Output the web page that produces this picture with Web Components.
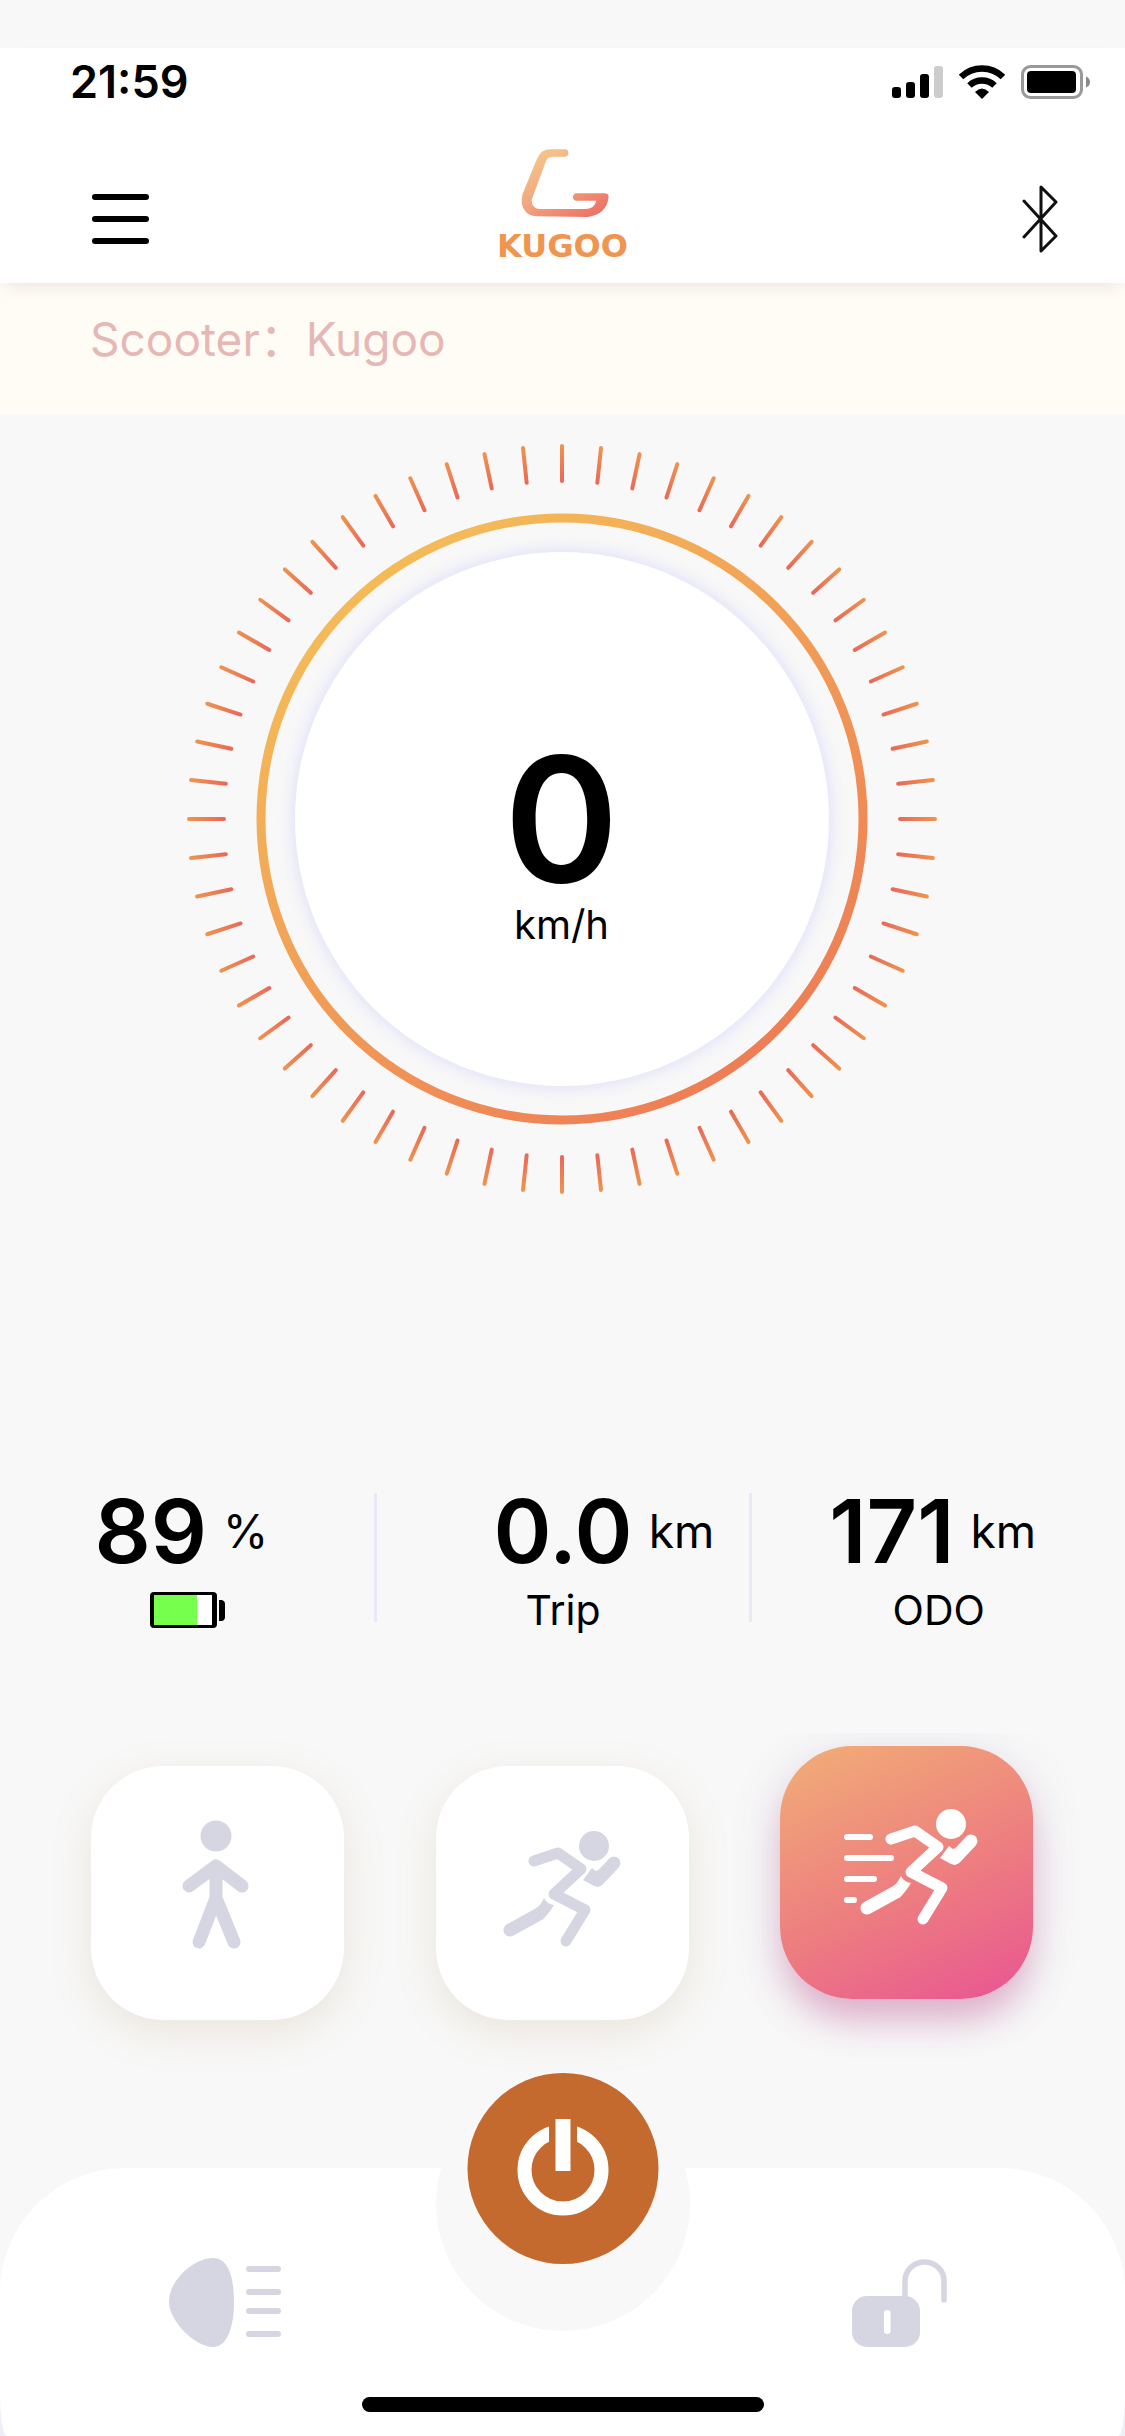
<!DOCTYPE html>
<html lang="en">
<head>
<meta charset="utf-8">
<meta name="viewport" content="width=device-width, initial-scale=1">
<title>Kugoo</title>
<style>
  html, body { margin: 0; }
  body {
    background: #f8f8f8;
    color: #000;
    font-family: Inter, "Noto Sans CJK SC", sans-serif;
    --muted: #d6d6e2;
    --page: #f8f8f8;
  }
</style>
</head>
<body>
<kugoo-app></kugoo-app>

<script>
const define = (name, html) => {
  const template = document.createElement('template');
  template.innerHTML = `<style>
    * { box-sizing: border-box; }
    button { appearance: none; border: 0; margin: 0; padding: 0; background: none; color: inherit; font: inherit; cursor: pointer; }
    svg { display: block; }
  </style>${html}`;
  customElements.define(name, class extends HTMLElement {
    constructor() {
      super();
      this.attachShadow({ mode: 'open' }).append(template.content.cloneNode(true));
      if (name === 'speed-gauge') this.drawTicks();
    }
    // One tick every six degrees round the dial
    drawTicks() {
      const first = this.shadowRoot.querySelector('.tick');
      for (let angle = 6; angle < 360; angle += 6) {
        const tick = first.cloneNode();
        tick.setAttribute('transform', `rotate(${angle} 376 376)`);
        first.parentNode.append(tick);
      }
    }
  });
};

define('status-bar', `
  <style>
    :host { display: flex; align-items: center; justify-content: space-between; padding: 7px 34px 0 70px; }
    time { font-size: 45px; line-height: 54px; font-weight: 600; }
    div { display: flex; align-items: center; gap: 16px; }
  </style>
  <time>21:59</time>
  <div>
    <svg width="51" height="34" viewBox="0 0 51 34" role="img" aria-label="Signal">
      <rect x="0" y="22" width="9" height="11" rx="3"/><rect x="14" y="17" width="9" height="16" rx="3"/>
      <rect x="28" y="9" width="9" height="24" rx="3"/><rect x="42" y="1" width="9" height="32" rx="3" fill="#ccc"/>
    </svg>
    <svg width="46" height="34" viewBox="0 0 46 34" role="img" aria-label="Wi-Fi">
      <path d="M2 12.500A30 30 0 0 1 44 12.500M10.500 21A18 18 0 0 1 35.500 21" transform="translate(0 -.5)" fill="none" stroke="#000" stroke-width="6.500"/>
      <path d="M16 27Q23 20 30 27L23 34Z"/>
    </svg>
    <svg width="70" height="34" viewBox="0 0 70 34" role="img" aria-label="Battery">
      <rect x="1.500" y="1.500" width="59" height="31" rx="8" fill="none" stroke="#999" stroke-width="3"/>
      <rect x="6" y="6" width="49" height="22" rx="4"/><path d="M65 11.500Q69 13 69 17T65 22.500Z" fill="#888"/>
    </svg>
  </div>`);

define('brand-logo', `
  <style>
    :host { display: flex; flex-direction: column; align-items: center; gap: 13px; }
    span { color: #f0954f; font: bold 32px/32px "DejaVu Sans", sans-serif; }
  </style>
  <svg width="94" height="68" viewBox="257 56 282 204" aria-hidden="true">
    <defs><linearGradient id="g" x1=".1" y1="0" x2=".85" y2="1">
      <stop offset="0" stop-color="#f6cb8d"/><stop offset=".5" stop-color="#f2a77f"/><stop offset="1" stop-color="#ec6f66"/>
    </linearGradient></defs>
    <path fill="url(#g)" d="M408 57H362Q335 57 323 85L280 190Q270 225 290 245Q303 258 325 258L475 260Q532 252 538 200Q538 189 525 189H442Q431 190 431 200Q431 211 442 211H501Q495 236 468 236H330Q307 234 307 208L350 92Q356 79 370 79H408Q417 78 417 68Q417 57 408 57Z"/>
  </svg>
  <span>KUGOO</span>`);

define('app-header', `
  <style>
    :host { display: block; position: relative; z-index: 1; margin-top: 48px; background: #fff; box-shadow: 0 8px 16px -6px rgba(80, 50, 60, .13); }
    nav { display: grid; grid-template-columns: 1fr auto 1fr; align-items: end; padding: 40px 67px 21px; }
    button { height: 86px; display: grid; place-items: center; }
    .menu { justify-self: start; margin-left: 25px; }
    .link { justify-self: end; }
  </style>
  <status-bar></status-bar>
  <nav aria-label="Main">
    <button class="menu" aria-label="Menu">
      <svg width="57" height="50" viewBox="0 0 57 50"><path d="M3 3H54M3 25H54M3 47H54" stroke="#000" stroke-width="6" stroke-linecap="round"/></svg>
    </button>
    <brand-logo></brand-logo>
    <button class="link" aria-label="Bluetooth">
      <svg width="36" height="70" viewBox="0 0 36 70"><path d="M2 17L34 52L19 67V3L34 18L2 53" fill="none" stroke="#111" stroke-width="3" stroke-linejoin="round" stroke-linecap="round"/></svg>
    </button>
  </nav>`);

define('scooter-banner', `
  <style>
    :host { display: block; padding: 26px 90px 45px; background: #fffcf5; color: #e5b8b5; font-size: 46px; line-height: 60px; }
  </style>
  <slot></slot>`);

define('speed-gauge', `
  <style>
    :host { display: grid; justify-items: center; margin-top: 29px; padding-right: 2px; }
    svg, .reading { grid-area: 1 / 1; }
    .reading { display: flex; flex-direction: column; align-items: center; gap: 16px; padding-top: 311px; }
    .speed { font-size: 174px; line-height: 130px; font-weight: 600; }
    .unit { font-size: 40px; line-height: 50px; }
  </style>
  <svg width="752" height="752" viewBox="0 0 752 752" aria-hidden="true">
    <defs>
      <linearGradient id="ring" x1=".15" y1=".15" x2=".75" y2=".95"><stop offset="0" stop-color="#f4ba58"/><stop offset="1" stop-color="#ee7e55"/></linearGradient>
      <linearGradient id="bar" gradientUnits="userSpaceOnUse" x1="0" y1="1" x2="0" y2="40"><stop offset="0" stop-color="#ef944e"/><stop offset="1" stop-color="#ea6757"/></linearGradient>
      <filter id="soft" x="-10%" y="-10%" width="120%" height="120%"><feGaussianBlur stdDeviation="8"/></filter>
    </defs>
    <g><rect class="tick" x="374" y="1" width="4" height="39" rx="2" fill="url(#bar)"/></g>
    <circle cx="376" cy="376" r="301" fill="none" stroke="url(#ring)" stroke-width="9"/>
    <circle cx="376" cy="376" r="269" fill="#dfdffa" filter="url(#soft)"/>
    <circle cx="376" cy="376" r="267" fill="#fff"/>
  </svg>
  <div class="reading"><span class="speed">0</span><span class="unit">km/h</span></div>`);

define('ride-stat', `
  <style>
    :host { display: flex; flex: 1; flex-direction: column; gap: 16px; }
    .value { display: flex; align-items: center; justify-content: center; gap: 16px; padding-right: 12px; }
    :host([centered]) .value { display: grid; grid-template-columns: 1fr auto 1fr; padding-right: 0; }
    :host([centered]) .number { grid-column: 2; }
    .number { font-size: 88px; line-height: 76px; font-weight: 600; }
    .unit { font-size: 46px; line-height: 46px; }
    .label { display: flex; justify-content: center; font-size: 41px; line-height: 50px; }
  </style>
  <div class="value"><span class="number"><slot name="number"></slot></span><span class="unit"><slot name="unit"></slot></span></div>
  <div class="label"><slot></slot></div>`);

define('battery-level', `
  <style>:host { display: block; padding-top: 7px; }</style>
  <svg width="75" height="36" viewBox="0 0 75 36" role="img" aria-label="Battery level">
    <rect width="67" height="36" rx="4"/><rect x="4" y="3" width="58" height="30" fill="#fff"/>
    <rect x="4" y="3" width="43" height="30" fill="#76ff4c"/><path d="M69 8H72Q75 9 75 12V25Q75 28 72 29H69Z"/>
  </svg>`);

define('ride-stats', `
  <style>
    :host { display: flex; align-items: flex-start; margin-top: 298px; padding-left: 1px; }
    i { width: 3px; height: 129px; background: #ebe9f7; }
  </style>
  <ride-stat><span slot="number">89</span><span slot="unit">%</span><battery-level></battery-level></ride-stat>
  <i></i>
  <ride-stat centered><span slot="number">0.0</span><span slot="unit">km</span>Trip</ride-stat>
  <i></i>
  <ride-stat><span slot="number">171</span><span slot="unit">km</span>ODO</ride-stat>`);

define('mode-button', `
  <style>
    :host { display: block; color: var(--muted); }
    button { display: block; border-radius: 72px; background: #fff; box-shadow: 0 12px 40px rgba(170, 140, 90, .17); }
    :host([active]) { color: #fff; margin-top: -20px; clip-path: inset(-13px -60px -80px); }
    :host([active]) button { background: linear-gradient(155deg, #f1a977 6%, #ed7d80 56%, #e95a90 94%); box-shadow: 0 26px 36px -6px rgba(205, 80, 140, .36), 0 10px 50px rgba(120, 90, 150, .18); }
  </style>
  <button><slot></slot></button>`);

const runner = `
  <g fill="none" stroke="currentColor" stroke-linecap="round" stroke-linejoin="round">
    <path stroke-width="11" d="M98 95L122 87L145 103L118 128L149 144L130 175"/>
    <path stroke-width="13" d="M178 97L162 114M74 164L103 148"/>
  </g>
  <g fill="currentColor">
    <circle cx="158" cy="80" r="15"/>
    <path d="M147 114L156 102L160 105L165 103L168 116L162 121L158 120Z"/>
    <path d="M100 142Q104 140 108 132Q111 138 118 139Q112 149 106 154Z"/>
  </g>`;

define('ride-modes', `
  <style>
    :host { display: flex; align-items: flex-start; justify-content: space-between; margin-top: 131px; padding: 0 92px 0 91px; }
  </style>
  <mode-button>
    <svg width="253" height="254" viewBox="0 0 253 254" role="img" aria-label="Walk mode">
      <circle cx="125" cy="70" r="15.500" fill="currentColor"/>
      <path d="M98 120L125 100L151 120M125 100V137M108 176L125 132L143 176" fill="none" stroke="currentColor" stroke-width="13" stroke-linecap="round" stroke-linejoin="round"/>
    </svg>
  </mode-button>
  <mode-button>
    <svg width="253" height="254" viewBox="0 0 253 254" role="img" aria-label="Run mode">${runner}</svg>
  </mode-button>
  <mode-button active>
    <svg width="253" height="253" viewBox="0 0 253 253" role="img" aria-label="Sprint mode">
      <g transform="translate(13 -2)">${runner}</g>
      <path d="M67 91H90M67 112H111M67 133H94M67 154H74" stroke="currentColor" stroke-width="6" stroke-linecap="round"/>
    </svg>
  </mode-button>`);

define('control-bar', `
  <style>
    :host { display: block; position: relative; margin-top: 148px; background: linear-gradient(transparent 220px, #eeeef6 220px); }
    nav { display: flex; justify-content: space-between; padding: 86px 173px 85px 165px; background: #fff; border-radius: 125px 125px 7px 7px / 125px 125px 41px 41px; color: var(--muted); }
    nav > button { display: grid; place-items: center; height: 97px; }
    .notch { position: absolute; left: 50%; top: 0; width: 254px; height: 164px; transform: translateX(-50%); overflow: hidden; }
    .notch::before { content: ""; display: block; height: 254px; margin-top: -91px; border-radius: 50%; background: var(--page); }
    .power { position: absolute; left: 50%; top: -95px; transform: translateX(-50%); border-radius: 50%; background: #c46a2f; }
    .home { position: absolute; left: 50%; bottom: 24px; width: 402px; height: 15px; transform: translateX(-50%); border-radius: 8px; background: #000; }
  </style>
  <nav aria-label="Controls">
    <button aria-label="Headlight">
      <svg width="120" height="97" viewBox="165 2254 120 97">
        <path fill="currentColor" d="M169 2302C169 2279 195 2258 213 2258C229 2258 234 2279 234 2302C234 2325 228 2347 213 2347C195 2347 169 2321 169 2302Z"/>
        <path d="M249 2269H278M249 2292H278M249 2311H278M249 2334H278" stroke="currentColor" stroke-width="6" stroke-linecap="round"/>
      </svg>
    </button>
    <button aria-label="Unlock">
      <svg width="104" height="97" viewBox="848 2254 104 97">
        <rect x="852" y="2296" width="68" height="51" rx="15" fill="currentColor"/>
        <path d="M905 2300V2281A19.500 19 0 0 1 944 2281V2300" fill="none" stroke="currentColor" stroke-width="5.500" stroke-linecap="round"/>
        <rect x="884" y="2310" width="6.500" height="24" rx="3" fill="#fff"/>
      </svg>
    </button>
  </nav>
  <div class="notch"></div>
  <button class="power" aria-label="Power">
    <svg width="191" height="191" viewBox="0 0 191 191">
      <circle cx="95.500" cy="97" r="38.500" fill="none" stroke="#fff" stroke-width="14"/>
      <path d="M81.500 46H109.500V97H81.500Z" fill="#c46a2f"/><path d="M88 46H103V98H88Z" fill="#fff"/>
    </svg>
  </button>
  <div class="home"></div>`);

define('kugoo-app', `
  <style>
    :host { display: flex; flex-direction: column; min-height: 100vh; overflow: hidden; }
  </style>
  <app-header></app-header>
  <scooter-banner>Scooter：Kugoo</scooter-banner>
  <main>
    <speed-gauge></speed-gauge>
    <ride-stats></ride-stats>
    <ride-modes></ride-modes>
  </main>
  <control-bar></control-bar>`);
</script>
</body>
</html>
